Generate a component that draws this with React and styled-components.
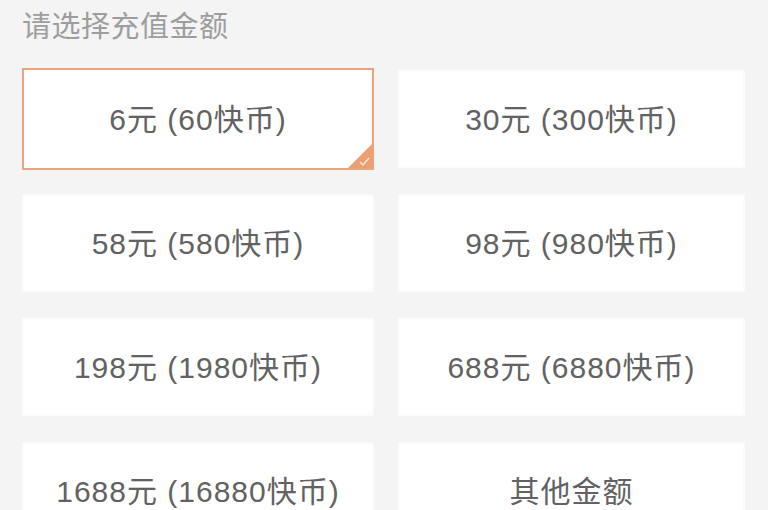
import React from "react";
import styled, { createGlobalStyle } from "styled-components";

const Global = createGlobalStyle`
  html, body { margin: 0; padding: 0; background: #f4f4f4; }
  body { font-family: "Noto Sans CJK SC", "Noto Sans", sans-serif; }
`;

const Page = styled.div`
  width: 768px;
  height: 510px;
  overflow: hidden;
  background: #f4f4f4;
  padding: 0 23px 0 22px;
  box-sizing: border-box;
`;

const Title = styled.div`
  font-size: 29px;
  line-height: 40px;
  color: #9d9d9d;
  padding-top: 4px;
  height: 70px;
  box-sizing: border-box;
  letter-spacing: 0.5px;
`;

const Grid = styled.div`
  display: grid;
  grid-template-columns: 352px 347px;
  column-gap: 24px;
  row-gap: 26px;
`;

const Card = styled.div`
  position: relative;
  background: #ffffff;
  box-sizing: border-box;
  border: 2px solid ${(p) => (p.$active ? "#eea47a" : "#fbfbfb")};
  display: flex;
  align-items: center;
  justify-content: center;
  padding-bottom: 4px;
  font-family: "Liberation Sans", "Noto Sans CJK SC", sans-serif;
  font-size: 30px;
  letter-spacing: 1px;
  color: #626262;
  margin-top: ${(p) => (p.$active ? "-2px" : "0")};
  height: ${(p) => (p.$active ? "102px" : "98px")};
  margin-bottom: ${(p) => (p.$active ? "-2px" : "0")};
`;

const Corner = styled.svg`
  position: absolute;
  right: 0;
  bottom: 0;
  width: 24px;
  height: 24px;
`;

const items = [
  "6元 (60快币)",
  "30元 (300快币)",
  "58元 (580快币)",
  "98元 (980快币)",
  "198元 (1980快币)",
  "688元 (6880快币)",
  "1688元 (16880快币)",
  "其他金额",
];

export default function App() {
  return (
    <>
      <Global />
      <Page>
        <Title>请选择充值金额</Title>
        <Grid>
          {items.map((t, i) => (
            <Card key={t} $active={i === 0}>
              {t}
              {i === 0 && (
                <Corner viewBox="0 0 24 24">
                  <polygon points="24,0 24,24 0,24" fill="#eca072" />
                  <polyline
                    points="12,18 15,21 21,14"
                    fill="none"
                    stroke="#fde9dc"
                    strokeWidth="1.5"
                  />
                </Corner>
              )}
            </Card>
          ))}
        </Grid>
      </Page>
    </>
  );
}
